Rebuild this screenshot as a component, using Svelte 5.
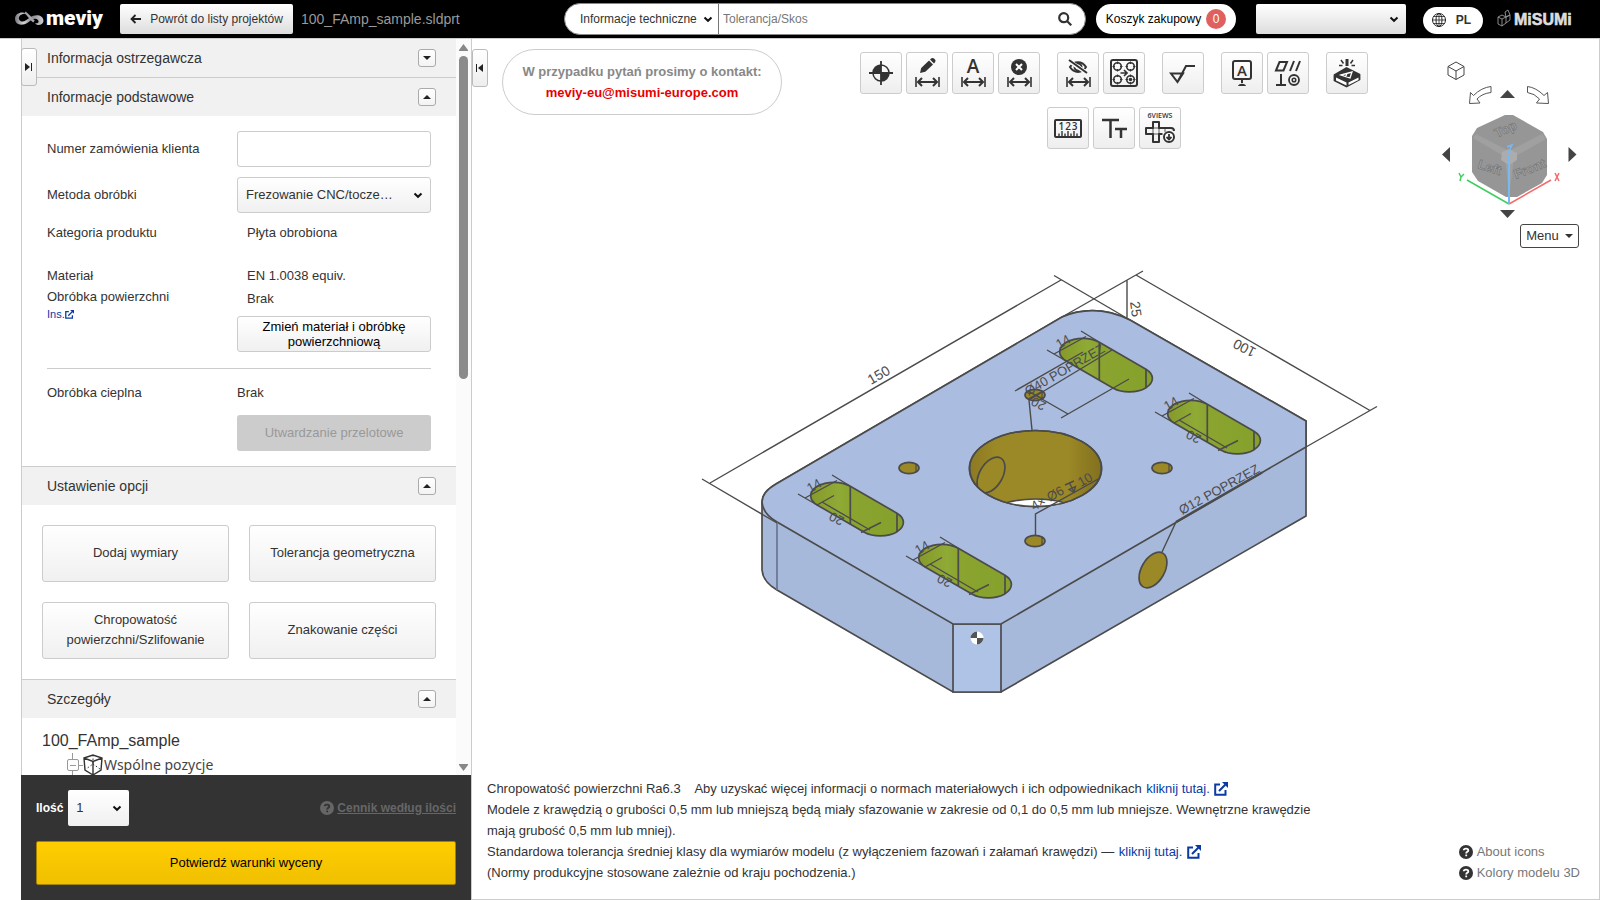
<script>
  const slots = [[0, 0], [108, 62], [249, -144], [357, -82]];
  const holes = [[909, 468], [1162, 468], [1035, 395], [1035, 541]];
  const options = ['Dodaj wymiary', 'Tolerancja geometryczna', 'Chropowatość powierzchni/Szlifowanie', 'Znakowanie części'];
  const toolGroups = [['origin', 'edit', 'auto', 'delete'], ['hide', 'pattern'], ['rough'], ['datum', 'gdt'], ['engrave']];
  const labels = {
    origin: 'Punkt bazowy', edit: 'Edytuj wymiar', auto: 'Wymiary automatyczne', delete: 'Usuń wymiar', hide: 'Ukryj wymiary',
    pattern: 'Grupa otworów', rough: 'Chropowatość', datum: 'Baza', gdt: 'Tolerancja geometryczna', engrave: 'Znakowanie',
    ruler: 'Pomiar', text: 'Rozmiar tekstu', views: '6 widoków'
  };
</script>

{#snippet chevron()}
  <svg class="chev" width="10" height="7" viewBox="0 0 10 7" aria-hidden="true"><path d="M1.500 1.500 5 4.800 8.500 1.500" /></svg>
{/snippet}

{#snippet external(size)}
  <svg class="ext" width={size} height={size} viewBox="0 0 14 14" aria-hidden="true">
    <path d="M6 2.5H1.2v10.300h10.300V8M5 9l7-7" fill="none" stroke="currentColor" stroke-width="2" />
    <path d="M8 0h6v6z" fill="currentColor" />
  </svg>
{/snippet}

{#snippet question()}
  <svg class="q" width="14" height="14" viewBox="0 0 14 14" aria-hidden="true">
    <circle cx="7" cy="7" r="7" fill="currentColor" />
    <path class="qm" d="M4.700 5.300C4.800 3 9.300 3 9.300 5.400 9.300 6.900 7.200 6.800 7.200 8.400M7.200 9.600v1.700" />
  </svg>
{/snippet}

{#snippet head(title, open)}
  <div class="head">
    <h2>{title}</h2>
    <button class="toggle" aria-label={title} aria-expanded={open}>
      <svg width="8" height="4" viewBox="0 0 8 4"><path d={open ? 'M0 4 4 0l4 4z' : 'M0 0h8L4 4z'} /></svg>
    </button>
  </div>
{/snippet}

{#snippet span()}
  <path d="M9 24v10M32 24v10" stroke-width="1.600" />
  <path d="M11 29h19M15 25l-4 4 4 4M26 25l4 4-4 4" stroke-width="2" />
{/snippet}

{#snippet tool(name)}
  <button class="tool" aria-label={labels[name]}>
    <svg width="40" height="40" viewBox="0 0 40 40" fill="none" stroke="#333" stroke-width="2">
      {#if name === 'origin'}
        <circle cx="20" cy="20" r="8" stroke-width="1.500" />
        <path d="M20 20v-8a8 8 0 0 0-8 8zM20 20v8a8 8 0 0 0 8-8z" fill="#333" stroke="none" />
        <path d="M20 8v24M8 20h24" stroke-width="1.800" />
      {:else if name === 'edit'}
        <path d="m13 20 1.200-5 7.800-7.500 4 4-7.700 7.300z" fill="#333" stroke="none" />
        <path d="m23 6.500 1.500-1.200a2 2 0 0 1 2.500.200l1 1a2 2 0 0 1 0 2.700l-1 1.300z" fill="#333" stroke="none" />
        {@render span()}
      {:else if name === 'auto'}
        <text x="20" y="20" class="ic" font-size="19">A</text>
        {@render span()}
      {:else if name === 'delete'}
        <circle cx="20" cy="14" r="8" fill="#333" stroke="none" />
        <path d="m17 11 6 6M23 11l-6 6" stroke="#fff" />
        {@render span()}
      {:else if name === 'hide'}
        <path d="M12 14c4-6.500 12-6.500 16 0-4 6.500-12 6.500-16 0z" />
        <circle cx="20" cy="14" r="3.500" />
        <path d="m11 8 18 12" stroke="#f9f9f9" stroke-width="4" />
        <path d="m11 7 18 13" />
        {@render span()}
      {:else if name === 'pattern'}
        <rect x="7" y="7" width="26" height="26" rx="2" stroke-width="2" />
        {#each [[13.5, 13.5], [26.5, 13.5], [13.5, 26.5], [26.5, 26.5]] as [x, y]}
          <circle cx={x} cy={y} r="3.800" stroke-width="1.600" />
          <path d="M{x - 5} {y}h2.500M{x + 2.500} {y}h2.500M{x} {y - 5}v2.500M{x} {y + 2.500}v2.500" stroke-width="1.200" />
        {/each}
        <circle cx="26.500" cy="26.500" r="1.800" fill="#333" stroke="none" />
        <path d="M16.500 20h6.500M20 17l3 3-3 3" stroke-width="1.700" />
      {:else if name === 'rough'}
        <path d="M8 20.500h12l-5.500 8.500zM14.500 29 23 13h9" />
      {:else if name === 'datum'}
        <rect x="11" y="8" width="18" height="18" rx="2" />
        <text x="20" y="22.500" class="ic" font-size="15">A</text>
        <path d="M20 26v4" /><path d="M16 33c1-3 7-3 8 0z" fill="#333" stroke="none" />
      {:else if name === 'gdt'}
        <path d="M8 17.500 11.500 9H19l-3.500 8.500zM22 18l4-10M28 18l4-10M13 21v11M8 32h10" />
        <circle cx="26" cy="27" r="5" stroke-width="1.800" /><circle cx="26" cy="27" r="1.800" stroke-width="1.500" />
      {:else if name === 'engrave'}
        <path d="m7.500 22 12-7 13 6.500v5l-13 7-12-6z" stroke-width="1.800" fill="#333" stroke-linejoin="round" />
        <path d="m9 24.500 10.500 5v3L9 27.500zM21.500 29.500l10-5v2.500l-10 5z" fill="#fff" stroke="none" />
        <path d="m14 22 11-3-2 6zM20 20.400l-1.500 3.500" stroke="#fff" stroke-width="1.300" />
        <path d="M20 6v7" stroke-width="3" /><path d="m14 7 2.500 3.500M26 7l-2.500 3.500M12 12.500h3.500M24.500 12.500H28" stroke-width="1.500" />
      {:else if name === 'ruler'}
        <rect x="7" y="12" width="26" height="17" rx="1" />
        <text x="20.500" y="22" class="ic" font-size="10" letter-spacing="1">123</text>
        <path d="M11 28v-2.500M14 28v-5M17 28v-2.500M20 28v-5M23 28v-2.500M26 28v-5M29 28v-2.500" stroke-width="1.400" />
      {:else if name === 'text'}
        <path d="M8 12h17M16.500 12v18" stroke-width="2.500" /><path d="M21 21h12M27 21v9" stroke-width="2.500" />
      {:else}
        <text x="20" y="10" class="ic v" font-size="7">6VIEWS</text>
        <path d="M22.500 26H19v8h-6v-8H6v-6h7v-6h6v6h12q3 0 3 3" stroke-linejoin="round" />
        <path d="M13 20h6v6h-6zM25 20v4" stroke-width=".8" />
        <circle cx="29" cy="29" r="5" fill="#fff" /><path d="M29 26v5M26.500 29l2.500 2.500 2.500-2.500" stroke-width="1.800" />
      {/if}
    </svg>
  </button>
{/snippet}

<div class="page">
  <header>
    <a class="logo" href="#top" aria-label="meviy">
      <svg width="92" height="24" viewBox="0 0 92 24">
        <defs>
          <linearGradient id="lg"><stop offset="0" stop-color="#77747c" /><stop offset=".3" stop-color="#d5d2d8" /><stop offset=".6" stop-color="#8b8890" /><stop offset="1" stop-color="#d0ced2" /></linearGradient>
        </defs>
        <path d="M12 6.500C8 4 1 6 1 11.500 1 18 8 19.500 14 15.500c4-3 7-5 10-2.500 1.500 2 0 4-3 3 1 3 8 3 8.500-2 0-6-8-7.500-13.500-3.500-4 3-6.500 5-9.500 3.500C3 12 5 6.500 12 6.500z" fill="url(#lg)" />
        <path d="M11 5.500c3 1.500 5.500 6.500 9 9" fill="none" stroke="#a5a2a8" stroke-width="2.500" />
        <text x="32" y="18" class="word">meviy</text>
      </svg>
    </a>
    <button class="back">
      <svg width="11" height="10" viewBox="0 0 11 10"><path d="M11 5H1.500M5.500 1l-4 4 4 4" fill="none" stroke="#222" stroke-width="1.800" /></svg>
      Powrót do listy projektów
    </button>
    <span class="file">100_FAmp_sample.sldprt</span>
    <form class="search" onsubmit={(e) => e.preventDefault()}>
      <label class="pick cat">
        <select aria-label="Kategoria"><option>Informacje techniczne</option></select>
        {@render chevron()}
      </label>
      <input type="text" aria-label="Szukaj" placeholder="Tolerancja/Skos" />
      <button aria-label="Szukaj">
        <svg width="14" height="14" viewBox="0 0 14 14" fill="none" stroke="#333" stroke-width="2.200"><circle cx="5.700" cy="5.700" r="4.500" /><path d="m9 9 4.300 4.300" /></svg>
      </button>
    </form>
    <button class="cart">Koszyk zakupowy <span>0</span></button>
    <label class="pick user"><select aria-label="Konto"><option></option></select>{@render chevron()}</label>
    <button class="lang">
      <svg width="14" height="14" viewBox="0 0 14 14" fill="none" stroke="#222"><circle cx="7" cy="7" r="6.500" /><ellipse cx="7" cy="7" rx="3" ry="6.500" /><path d="M7 0v14M0 7h14M1.500 3.500h11M1.500 10.500h11" stroke-width=".8" /></svg>
      PL
    </button>
    <a class="misumi" href="#misumi" aria-label="MiSUMi">
      <svg width="78" height="20" viewBox="0 0 78 20">
        <path d="m1 8 4-2 4 2v6l-4 3-4-2zM1 8l4 2 4-2M5 10v7M8 3l3-2 2 5-4 2zM9 8l4-2v5l-4 3" fill="none" stroke="#999" stroke-width=".9" />
        <text x="17" y="16" class="brand">MiSUMi</text>
      </svg>
    </a>
  </header>

  <main>
    <aside>
      <button class="tab" aria-label="Rozwiń panel"><svg width="8" height="8" viewBox="0 0 8 8"><path d="M0 0 5 4 0 8z" /><path d="M6 0h1v8H6z" fill="#777" /></svg></button>
      <div class="scroller">
        <div class="content">
          {@render head('Informacja ostrzegawcza', false)}
          {@render head('Informacje podstawowe', true)}
          <div class="basic">
            <label for="order">Numer zamówienia klienta</label>
            <input id="order" type="text" />
            <label for="method">Metoda obróbki</label>
            <div class="pick method"><select id="method"><option>Frezowanie CNC/tocze…</option></select>{@render chevron()}</div>
            <span>Kategoria produktu</span><span class="val">Płyta obrobiona</span>
            <div class="names"><span>Materiał</span><span>Obróbka powierzchni</span><a href="#ins">Ins.{@render external(9)}</a></div>
            <div class="values"><span class="val">EN 1.0038 equiv.</span><span class="val">Brak</span><button class="soft change">Zmień materiał i obróbkę powierzchniową</button></div>
            <hr />
            <span>Obróbka cieplna</span><span>Brak</span>
            <button class="off" disabled>Utwardzanie przelotowe</button>
          </div>
          {@render head('Ustawienie opcji', true)}
          <div class="opts">
            {#each options as o}<button class="soft">{o}</button>{/each}
          </div>
          {@render head('Szczegóły', true)}
          <div class="tree">
            <p>100_FAmp_sample</p>
            <div class="node">
              <svg width="38" height="24" viewBox="0 0 38 24" fill="none">
                <path d="M6.500 0v6M6.500 18v6M12 12.500h5" stroke="#999" />
                <rect x="1.500" y="6.500" width="11" height="11" rx="1.500" stroke="#999" /><path d="M4 12.500h6" stroke="#999" />
                <path d="m18 5 9-3 9 3-1 12-8 5-8-5zM18 5l9 3.500L36 5M27 8.500V22" stroke="#333" stroke-width="1.400" />
                <path d="M27 2v9l-7 5M27 11l7 5" stroke="#333" stroke-dasharray="1.500 2" />
              </svg>
              <span>Wspólne pozycje</span>
            </div>
          </div>
        </div>
        <div class="bar" aria-hidden="true">
          <svg width="9" height="7" viewBox="0 0 9 7"><path d="M4.500 0 9 6v1H0V6z" /></svg>
          <div class="track"><i></i></div>
          <svg width="9" height="7" viewBox="0 0 9 7"><path d="M0 0h9v1L4.500 7 0 1z" /></svg>
        </div>
      </div>
      <div class="foot">
        <div class="qty">
          <label for="qty">Ilość</label>
          <div class="pick num"><select id="qty"><option>1</option></select>{@render chevron()}</div>
          <a href="#prices">{@render question()}<b>Cennik według ilości</b></a>
        </div>
        <button class="confirm">Potwierdź warunki wyceny</button>
      </div>
    </aside>

    <section class="viewer">
      <svg class="model" viewBox="472 39 1127 860" fill="none" stroke="#4b4b4b" stroke-width="1.700">
        <defs>
          <linearGradient id="gs"><stop offset="0" stop-color="#85992b" /><stop offset=".3" stop-color="#90aa36" /><stop offset=".43" stop-color="#8ba431" /><stop offset=".44" stop-color="#8aa42f" /><stop offset="1" stop-color="#86a02d" /></linearGradient>
          <linearGradient id="gh"><stop offset="0" stop-color="#8c7923" /><stop offset=".2" stop-color="#9b8826" /><stop offset=".75" stop-color="#9b8826" /><stop offset="1" stop-color="#82701f" /></linearGradient>
          <clipPath id="hole"><ellipse cx="1035.500" cy="468.500" rx="66" ry="38" /></clipPath>
        </defs>
        <path d="M762 502V570Q763 582 777 590L953 692H1001L1306 516V421L1130 320Q1095 303 1062 317L776 484Q762 492 762 502z" fill="#a7b9da" />
        <path d="M953 624H1001V692H953z" fill="#afc3e6" />
        <path d="M777 522 953 624H1001L1306 447V421L1130 320Q1095 303 1062 317L776 484Q762 492 762 502 763 514 777 522z" fill="#aabcdf" />
        <path d="M777 522V590" stroke="#69758d" />
        <g stroke-width="1.400">
          <path d="M710 483 1061 280M702 479 777 523M1054 275.500 1130 320M1136 275 1370 410.500M1143 271 1062 317M1377 406.500 1306 447M1127 280V318" />
        </g>
        {#each slots as [x, y], i}
          <g transform="translate({x} {y})">
            <path d="M850.300 486.200 897 513.200A23.200 13.400 0 0 1 864.300 532.200L817.500 505.200A23.200 13.400 0 0 1 850.300 486.200z" fill="url(#gs)" />
            <path d="M850.300 486V524M897 513V532" />
            <path d="M805 498 837 480.500M798 494 818 505.500M832 475 850 486" stroke-width="1.400" />
            <text transform="translate(810 493) rotate(-30)" font-size="13">14</text>
            {#if i !== 2}
              <path d="M822 502 870 530M817 505 834 495.500M861 532.500 881 522.500" stroke-width="1.400" />
              <text transform="translate(845 518) rotate(207)" font-size="13">20</text>
            {/if}
          </g>
        {/each}
        <ellipse cx="1035.500" cy="468.500" rx="66" ry="38" fill="url(#gh)" />
        <g clip-path="url(#hole)">
          <ellipse cx="1035.500" cy="537" rx="66" ry="38" fill="#fff" />
          <ellipse transform="translate(991 475) rotate(-60)" rx="19.500" ry="11.500" fill="#9b8826" />
        </g>
        <ellipse cx="1035.500" cy="468.500" rx="66" ry="38" />
        {#each holes as [x, y]}
          <ellipse cx={x} cy={y} rx="10" ry="5.700" fill="#9b8826" />
          <path d="M{x + 7} {y - 4}v8" stroke-width="1.200" />
        {/each}
        <ellipse transform="translate(1153 570) rotate(-60)" rx="19.500" ry="11.500" fill="#9b8826" />
        <g stroke-width="1.400">
          <path d="M1032 430 1029 400 1112 350M1015 391 1083 352M1028 391 1068 414M1061 418 1129 379M1028 391 1043 399M1028 399 1043 391" />
          <path d="M1035.500 536V514L1100 478M1162 552 1176 522" />
          <path d="M1176 522 1262 472.500" stroke-width="2.500" />
          <path d="M1065 485l9-4M1069.500 483l4 8M1069 489.500l5 3 1.500-6z" />
        </g>
        <text transform="translate(871 385) rotate(-30)" font-size="14">150</text>
        <text transform="translate(1257 349) rotate(207)" font-size="14">100</text>
        <text transform="translate(1130 302) rotate(82)" font-size="14">25</text>
        <text transform="translate(1047 403) rotate(207)" font-size="13">20</text>
        <text transform="translate(1028 396) rotate(-30)" font-size="13">Ø40 POPRZEZ</text>
        <text transform="translate(1182 515) rotate(-29)" font-size="13">Ø12 POPRZEZ</text>
        <text transform="translate(1034 511) rotate(-30)" font-size="13">4× Ø6</text>
        <text transform="translate(1081 487) rotate(-30)" font-size="13">10</text>
        <g stroke="none"><circle cx="977" cy="638" r="6.500" fill="#fff" /><path d="M977 638v-6.500a6.500 6.500 0 0 0-6.500 6.500zM977 638v6.500a6.500 6.500 0 0 0 6.500-6.500z" fill="#555" /></g>
      </svg>

      <button class="tab right" aria-label="Zwiń panel"><svg width="8" height="8" viewBox="0 0 8 8"><path d="M7 0 2 4l5 4z" /><path d="M0 0h1v8H0z" /></svg></button>

      <div class="top">
        <div class="contact">W przypadku pytań prosimy o kontakt:<a href="mailto:meviy-eu@misumi-europe.com">meviy-eu@misumi-europe.com</a></div>
        <div class="tools">
          <div class="line">{#each toolGroups as g}<div class="group">{#each g as t}{@render tool(t)}{/each}</div>{/each}</div>
          <div class="line"><div class="group">{@render tool('ruler')}{@render tool('text')}{@render tool('views')}</div></div>
        </div>
        <div class="nav">
          <svg width="150" height="164" viewBox="1440 58 150 164" fill="none" stroke="#444">
            <path d="m1456 62 8 4.500v8.500l-8 4.500-8-4.500v-8.500zM1448 66.500l8 4.500 8-4.500M1456 71v8.500" />
            <path d="M1491 86.500v6q-9 1-14 6.500l3 4-10.500.500 1-11 3 3q8-8 17.500-9zM1527.500 86.500v6q7 1 12 6.500l-3 4 12 .500-1-11-3.500 3q-8-8-16.500-9z" stroke="#555" />
            <path d="M1500 98h15l-7.500-8zM1500 210h15l-7.500 8zM1450 147v15l-8-7.500zM1568.500 147v15l8-7.500z" fill="#444" stroke="none" />
            <path d="M1505 115h8l30 17 4 7v36l-5 8-25 14h-11l-28-16-6-9v-36l5-8z" fill="#969696" stroke="none" />
            <path d="m1473 138 3-4 33 17 33-17 4 5-32 18-5 39-4-39z" fill="#a0a0a0" stroke="none" />
            <path d="m1502 152 7-3 8 4v7l-8 5-8-5z" fill="#acacac" stroke="none" />
            <g class="face"><text transform="translate(1497 138) rotate(-25)">Top</text><text transform="translate(1477 168) rotate(18)">Left</text><text transform="translate(1516 179) rotate(-22)">Front</text></g>
            <path d="M1509 204 1467 180" stroke="#3fcf60" stroke-width="1.500" /><path d="m1509 204 42-24" stroke="#f46a6a" stroke-width="1.500" /><path d="M1509 204v-48" stroke="#79b9f2" stroke-width="2" />
            <path d="m1459 173 2 4 3-3M1461 177l-1 4" stroke="#3fcf60" stroke-width="1.500" /><path d="m1555 173 4 8M1559 173l-4 8" stroke="#f46a6a" stroke-width="1.500" /><path d="m1507 147 5-2-4 8 4-2" stroke="#79b9f2" stroke-width="1.500" />
          </svg>
          <button class="menu">Menu <svg width="8" height="4" viewBox="0 0 8 4"><path d="M0 0h8L4 4z" fill="#333" /></svg></button>
        </div>
      </div>

      <div class="notes">
        <div class="copy">
          <p>Chropowatość powierzchni Ra6.3 &nbsp;&nbsp; Aby uzyskać więcej informacji o normach materiałowych i ich odpowiednikach <a href="#mat">kliknij tutaj. {@render external(14)}</a></p>
          <p>Modele z krawędzią o grubości 0,5 mm lub mniejszą będą miały sfazowanie w zakresie od 0,1 do 0,5 mm lub mniejsze. Wewnętrzne krawędzie mają grubość 0,5 mm lub mniej).</p>
          <p>Standardowa tolerancja średniej klasy dla wymiarów modelu (z wyłączeniem fazowań i załamań krawędzi) — <a href="#tol">kliknij tutaj. {@render external(14)}</a></p>
          <p>(Normy produkcyjne stosowane zależnie od kraju pochodzenia.)</p>
        </div>
        <div class="help">
          <a href="#icons">{@render question()}About icons</a>
          <a href="#colors">{@render question()}Kolory modelu 3D</a>
        </div>
      </div>
    </section>
  </main>
</div>

<style>
  :global(body) { margin: 0; }
  * { box-sizing: border-box; }
  .page { height: 100vh; display: flex; flex-direction: column; overflow: hidden; background: #fff; color: #333; font: 13px/20px "Liberation Sans", Arial, sans-serif; }
  button, input, select { font: inherit; color: inherit; margin: 0; }
  button { cursor: pointer; padding: 0; }
  a { color: #0a3ba5; text-decoration: none; }
  svg { display: block; flex: none; }
  p, h2 { margin: 0; }

  header { height: 39px; flex: none; display: flex; align-items: center; padding: 0 25px 0 14px; background: #000; border-bottom: 1px solid #ccc; font-size: 12px; }
  .logo { margin-right: 14px; }
  .word { font: 900 21px Roboto, sans-serif; fill: #fff; }
  .back { height: 30px; width: 173px; display: flex; align-items: center; justify-content: center; gap: 9px; border: 0; border-radius: 2px; background: linear-gradient(#fff, #ddd); white-space: nowrap; }
  .file { margin: 0 auto 0 8px; color: #999; font-size: 14px; }
  .search { width: 522px; height: 32px; display: flex; border: 1px solid #888; border-radius: 16px; background: #fff; overflow: hidden; }
  .search input { flex: 1; min-width: 0; border: 0; outline: 0; padding: 0 4px; background: none; }
  .search input::placeholder { color: #777; opacity: 1; }
  .search button { width: 40px; display: grid; place-items: center; border: 0; background: none; }
  .pick { display: grid; align-items: center; }
  .pick select { grid-area: 1 / 1; width: 100%; height: 100%; appearance: none; outline: 0; border: 0; background: none; padding: 0 24px 0 8px; }
  .pick :global(.chev) { grid-area: 1 / 1; justify-self: end; margin-right: 7px; pointer-events: none; }
  .chev path { fill: none; stroke: #111; stroke-width: 2; }
  .cat { width: 154px; border-right: 1px solid #777; }
  .cat select { padding: 0 16px 0 15px; }
  .cat :global(.chev) { margin-right: 5px; }
  .cart { margin-left: 10px; width: 140px; height: 30px; display: flex; align-items: center; justify-content: center; gap: 5px; border: 0; border-radius: 15px; background: #fff; color: #000; white-space: nowrap; }
  .cart span { width: 20px; height: 20px; border-radius: 10px; background: #e06060; color: #fff; }
  .user { margin-left: 20px; width: 150px; height: 30px; border-radius: 2px; background: linear-gradient(#fff, #ddd); }
  .lang { margin: 2px 14px 0 17px; width: 60px; height: 27px; display: flex; align-items: center; justify-content: center; gap: 10px; border: 0; border-radius: 14px; background: #fff; font-weight: 700; padding-right: 3px; }
  .brand { font: 700 16px "Liberation Sans", sans-serif; fill: #ddd; stroke: #ddd; stroke-width: .6px; }

  main { flex: 1; min-height: 0; display: flex; padding-left: 21px; }
  aside { position: relative; width: 451px; flex: none; display: flex; flex-direction: column; border: solid #ccc; border-width: 0 1px; }
  .tab { position: absolute; z-index: 2; top: 9px; left: -1px; width: 16px; height: 38px; display: grid; place-items: center; border: 1px solid #bbb; border-radius: 3px; background: linear-gradient(#fff, #eee); }
  .tab.right { left: 0; top: 10px; }
  .tab path { fill: #222; }
  .scroller { flex: 1; min-height: 0; display: flex; overflow: hidden; }
  .content { flex: 1; min-width: 0; overflow: hidden; }
  .bar { width: 15px; padding: 5px 0 4px; display: flex; flex-direction: column; align-items: center; gap: 5px; background: #fbfbfb; fill: #888; }
  .track { flex: 1; width: 9px; }
  .track i { display: block; height: 46%; border-radius: 5px; background: #8b8b8b; }
  .head { display: flex; align-items: center; justify-content: space-between; height: 39px; padding: 0 20px 0 25px; background: #f1f1f1; border-top: 1px solid #ccc; }
  .head:first-child { height: 38px; border: 0; }
  h2 { font-size: 14px; font-weight: 400; }
  .toggle { width: 18px; height: 18px; display: grid; place-items: center; border: 1px solid #aaa; border-radius: 3px; background: linear-gradient(#fff, #f3f3f3); fill: #222; }
  .soft { border: 1px solid #ccc; border-radius: 3px; background: linear-gradient(#fff, #f0f0f0); }
  .basic { display: grid; grid-template-columns: 190px 1fr; row-gap: 10px; align-items: center; padding: 15px 25px; }
  .basic > input, .method { height: 36px; width: 100%; border: 1px solid #ccc; border-radius: 3px; }
  .basic > input { outline: 0; background: #fff; padding: 0 8px; }
  .method { background: linear-gradient(#fff, #f0f0f0); }
  .val { padding-left: 10px; }
  .names { display: flex; flex-direction: column; align-self: start; margin-top: 13px; gap: 1px; }
  .names a { display: flex; align-items: center; font-size: 11px; line-height: 12px; }
  .values { display: flex; flex-direction: column; margin-top: 13px; gap: 3px; }
  .change { margin-top: 4px; height: 36px; padding: 0 20px; line-height: 15px; color: #000; }
  hr { grid-column: 1 / -1; width: 100%; margin: 6px 0 4px; border: 0; border-top: 1px solid #ccc; }
  .off { grid-column: 2; margin-top: 2px; height: 36px; border: 0; border-radius: 3px; background: #ccc; color: #999; }
  .opts { display: grid; grid-template-columns: 1fr 1fr; grid-auto-rows: 57px; gap: 20px; padding: 20px; }
  .opts .soft { padding-bottom: 2px; }
  .tree { padding: 11px 20px; }
  .tree p { font-size: 16px; line-height: 24px; }
  .node { display: flex; align-items: center; padding-left: 24px; font: 14px/24px "Noto Sans", sans-serif; color: #444; }
  .foot { padding: 15px; margin-left: -1px; height: 125px; background: #333; color: #fff; }
  .qty { display: flex; align-items: center; gap: 5px; margin-bottom: 15px; }
  .qty label { font-size: 12px; font-weight: 700; }
  .num { width: 61px; height: 36px; border-radius: 2px; background: linear-gradient(#fff, #f0f0f0); color: #333; }
  .qty a { margin-left: auto; display: flex; align-items: center; gap: 3px; color: #666; font-size: 12px; }
  .qty b { text-decoration: underline; }
  .qm { fill: none; stroke: #fff; stroke-width: 1.800; }
  .qty :global(.qm) { stroke: #333; }
  .confirm { width: 100%; height: 44px; border: 1px solid #a48200; border-radius: 2px; background: linear-gradient(#ffcd00, #f0c000); color: #000; }

  .viewer { position: relative; flex: 1; min-width: 0; display: flex; flex-direction: column; justify-content: space-between; border: solid #ccc; border-width: 0 1px 1px 0; }
  .model { position: absolute; inset: 0; width: 100%; height: 100%; }
  .model text { fill: #4b4b4b; stroke: none; }
  .top { position: relative; display: flex; align-items: flex-start; padding: 10px 9px 0 30px; }
  .contact { width: 280px; height: 66px; display: flex; flex-direction: column; justify-content: center; align-items: center; border: 1px solid #ccc; border-radius: 33px; line-height: 21px; font-weight: 700; color: #888; }
  .contact a { color: #e60000; }
  .tools { flex: 1; display: flex; flex-direction: column; gap: 13px; padding: 3px 0 0 5px; }
  .line { display: flex; justify-content: center; gap: 17px; }
  .group { display: flex; gap: 4px; }
  .tool { width: 42px; height: 42px; border: 1px solid #ccc; border-radius: 3px; background: linear-gradient(#fff, #eee); }
  .ic { fill: #333; stroke: none; text-anchor: middle; font-family: "Open Sans", sans-serif; font-weight: 600; }
  .nav { width: 150px; padding-top: 9px; }
  .face text { font: 700 13px "Liberation Sans", sans-serif; fill: #a6a6a6; stroke: #777; stroke-width: .7px; }
  .menu { display: flex; align-items: center; justify-content: center; gap: 6px; width: 59px; height: 24px; margin: 2px 0 0 80px; border: 1px solid #444; border-radius: 3px; background: #fff; }
  .notes { position: relative; display: flex; justify-content: space-between; align-items: flex-end; padding: 0 19px 16px 15px; line-height: 21px; }
  .copy { max-width: 840px; }
  .copy a { margin-left: 1px; }
  .copy :global(.ext) { display: inline-block; margin-left: 1px; vertical-align: -3px; }
  .help { display: flex; flex-direction: column; }
  .help a { display: flex; align-items: center; gap: 4px; color: #777; }
  .help :global(.q) { color: #333; }
</style>
